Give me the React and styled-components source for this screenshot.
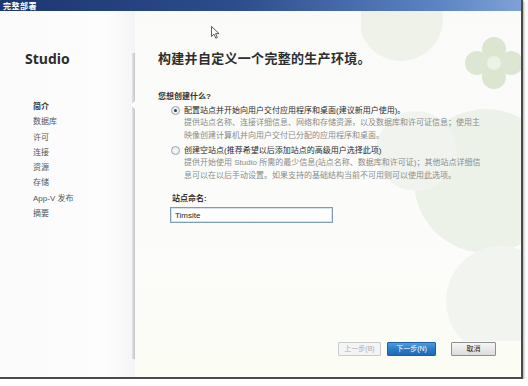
import React from "react";
import styled, { createGlobalStyle } from "styled-components";

const GlobalStyle = createGlobalStyle`
  html, body {
    margin: 0;
    padding: 0;
    background: #ffffff;
  }
  body {
    font-family: "Liberation Sans", "Noto Sans CJK SC", sans-serif;
  }
`;

const Frame = styled.div`
  width: 521px;
  height: 377px;
  display: flex;
  flex-direction: column;
  border-right: 2px solid #4a4a4a;
  border-bottom: 2px solid #4a4a4a;
  box-shadow: 1px 1px 2px rgba(0, 0, 0, 0.35);
  background: #fbfcf8;
  overflow: hidden;
`;

const TitleBar = styled.div`
  height: 11px;
  display: flex;
  align-items: center;
  padding-left: 3px;
  background: linear-gradient(90deg, #1b3770 0%, #2c4c8c 45%, #5d86c4 85%, #7ea2d6 100%);
  color: #ffffff;
  font-size: 8px;
  font-weight: bold;
  letter-spacing: 0.5px;
  flex-shrink: 0;
`;

const Body = styled.div`
  flex: 1;
  display: flex;
  position: relative;
  background: linear-gradient(180deg, #fafbf8 0%, #fcfdfa 70%, #fbfcf3 100%);
`;

const Decor = styled.svg`
  position: absolute;
  top: 0;
  right: 0;
  width: 160px;
  height: 330px;
  pointer-events: none;
`;

const Cursor = styled.svg`
  position: absolute;
  left: 211px;
  top: 15px;
  width: 9px;
  height: 13px;
`;

const Sidebar = styled.nav`
  width: 135px;
  flex-shrink: 0;
  position: relative;
  padding: 40px 0 0 25px;
  box-sizing: border-box;
  background: linear-gradient(90deg, #fbfbfb 0%, #fdfdfd 80%, #f4f4f6 100%);

  &::after {
    content: "";
    position: absolute;
    right: 0;
    top: 42px;
    bottom: 18px;
    width: 3px;
    background: linear-gradient(90deg, #e4e4e8, #c2c2c8);
  }
`;

const Notch = styled.div`
  position: absolute;
  right: 0;
  top: 90px;
  width: 0;
  height: 0;
  border-top: 4px solid transparent;
  border-bottom: 4px solid transparent;
  border-right: 4px solid #ffffff;
  z-index: 1;
`;

const Brand = styled.div`
  font-family: "Open Sans", "Liberation Sans", sans-serif;
  font-size: 14px;
  font-weight: bold;
  color: #2d2d2d;
  line-height: 16px;
  margin-bottom: 32px;
`;

const NavList = styled.ul`
  list-style: none;
  margin: 0;
  padding: 0 0 0 8px;
`;

const NavItem = styled.li`
  font-size: 8px;
  line-height: 15.3px;
  color: ${(p) => (p.$active ? "#333" : "#555")};
  font-weight: ${(p) => (p.$active ? "bold" : "normal")};
`;

const Main = styled.main`
  flex: 1;
  display: flex;
  flex-direction: column;
  padding: 40px 25px 21px 23px;
  position: relative;
`;

const Heading = styled.h1`
  margin: 0;
  font-size: 13px;
  line-height: 16px;
  font-weight: bold;
  color: #2e2e2e;
  letter-spacing: 0.3px;
`;

const Question = styled.div`
  margin-top: 24px;
  font-size: 8px;
  font-weight: bold;
  color: #333;
  line-height: 11px;
`;

const OptionList = styled.div`
  display: flex;
  flex-direction: column;
  gap: 2px;
  margin-top: 2px;
  padding-left: 13px;
`;

const Option = styled.div`
  display: flex;
  gap: 4px;
`;

const Radio = styled.span`
  width: 7px;
  height: 7px;
  margin-top: 2px;
  border-radius: 50%;
  border: 1px solid #9aa4ae;
  background: radial-gradient(circle, #f2f4f6 30%, #dfe3e8 100%);
  flex-shrink: 0;
  display: flex;
  align-items: center;
  justify-content: center;

  &::after {
    content: "";
    display: ${(p) => (p.$checked ? "block" : "none")};
    width: 3px;
    height: 3px;
    border-radius: 50%;
    background: #2a3a50;
  }
`;

const OptionText = styled.div`
  display: flex;
  flex-direction: column;
`;

const OptionTitle = styled.div`
  font-size: 8px;
  line-height: 13px;
  color: #2a2a2a;
`;

const OptionDesc = styled.div`
  font-size: 8px;
  line-height: 12.5px;
  color: #8a8a8a;
  white-space: nowrap;
`;

const FieldLabel = styled.div`
  margin-top: 11px;
  padding-left: 14px;
  font-size: 8px;
  font-weight: bold;
  color: #333;
  line-height: 11px;
`;

const Input = styled.input`
  margin: 3px 0 0 12px;
  width: 163px;
  height: 16px;
  box-sizing: border-box;
  border: 1px solid #7f9db9;
  box-shadow: inset 0 0 0 1px #d6e3ef;
  padding: 0 4px;
  font-family: "Liberation Sans", sans-serif;
  font-size: 8px;
  color: #222;
  background: #fff;
  outline: none;
`;

const Footer = styled.div`
  margin-top: auto;
  display: flex;
  justify-content: flex-end;
  align-items: center;
  gap: 6px;
`;

const Button = styled.button`
  height: 14px;
  min-width: ${(p) => p.$w || 44}px;
  margin-left: ${(p) => p.$gap || 0}px;
  padding: 0 4px;
  font-family: "Liberation Sans", "Noto Sans CJK SC", sans-serif;
  font-size: 7px;
  line-height: 12px;
  border-radius: 1px;
  border: 1px solid
    ${(p) => (p.$variant === "primary" ? "#1d5f9e" : p.$variant === "disabled" ? "#c8cacc" : "#8e8f8f")};
  color: ${(p) => (p.$variant === "primary" ? "#fff" : p.$variant === "disabled" ? "#a9adb2" : "#222")};
  background: ${(p) =>
    p.$variant === "primary"
      ? "linear-gradient(180deg, #4a9ee0 0%, #2a7dc8 50%, #1f6bb3 100%)"
      : p.$variant === "disabled"
      ? "#f3f4f5"
      : "linear-gradient(180deg, #f6f6f6 0%, #e8e8e8 50%, #dcdcdc 100%)"};
`;

const navItems = ["简介", "数据库", "许可", "连接", "资源", "存储", "App-V 发布", "摘要"];

const options = [
  {
    title: "配置站点并开始向用户交付应用程序和桌面(建议新用户使用)。",
    desc: [
      "提供站点名称、连接详细信息、网络和存储资源，以及数据库和许可证信息；使用主",
      "映像创建计算机并向用户交付已分配的应用程序和桌面。",
    ],
    checked: true,
  },
  {
    title: "创建空站点(推荐希望以后添加站点的高级用户选择此项)",
    desc: [
      "提供开始使用 Studio 所需的最少信息(站点名称、数据库和许可证)；其他站点详细信",
      "息可以在以后手动设置。如果支持的基础结构当前不可用则可以使用此选项。",
    ],
    checked: false,
  },
];

export default function App() {
  return (
    <>
      <GlobalStyle />
      <Frame>
        <TitleBar>完整部署</TitleBar>
        <Body>
          <Decor viewBox="0 0 160 330">
            <circle cx="40" cy="8" r="42" fill="#eef2e8" />
            <circle cx="125" cy="170" r="72" fill="#edf2e8" />
            <circle cx="55" cy="140" r="40" fill="#f1f4ee" />
            <circle cx="140" cy="290" r="55" fill="#f2f5ef" />
            <circle cx="133" cy="38" r="12" fill="#dbe5d0" />
            <circle cx="150" cy="52" r="12" fill="#dde6d3" />
            <circle cx="116" cy="52" r="12" fill="#dde6d3" />
            <circle cx="133" cy="66" r="12" fill="#dbe5d0" />
            <circle cx="133" cy="52" r="7" fill="#edf2e7" />
          </Decor>
          <Sidebar>
            <Notch />
            <Brand>Studio</Brand>
            <NavList>
              {navItems.map((item, i) => (
                <NavItem key={item} $active={i === 0}>
                  {item}
                </NavItem>
              ))}
            </NavList>
          </Sidebar>
          <Main>
            <Heading>构建并自定义一个完整的生产环境。</Heading>
            <Question>您想创建什么?</Question>
            <OptionList>
              {options.map((o) => (
                <Option key={o.title}>
                  <Radio $checked={o.checked} />
                  <OptionText>
                    <OptionTitle>{o.title}</OptionTitle>
                    {o.desc.map((line) => (
                      <OptionDesc key={line}>{line}</OptionDesc>
                    ))}
                  </OptionText>
                </Option>
              ))}
            </OptionList>
            <FieldLabel>站点命名:</FieldLabel>
            <Input defaultValue="Timsite" />
            <Footer>
              <Button $variant="disabled" $w={43}>上一步(B)</Button>
              <Button $variant="primary" $w={49}>下一步(N)</Button>
              <Button $w={45} $gap={9}>取消</Button>
            </Footer>
          </Main>
          <Cursor viewBox="0 0 9 13">
            <path d="M0.5 0.5 L0.5 10.5 L3 8.2 L4.8 12.2 L6.3 11.5 L4.6 7.6 L8 7.6 Z" fill="#fff" stroke="#333" strokeWidth="0.8" />
          </Cursor>
        </Body>
      </Frame>
    </>
  );
}
